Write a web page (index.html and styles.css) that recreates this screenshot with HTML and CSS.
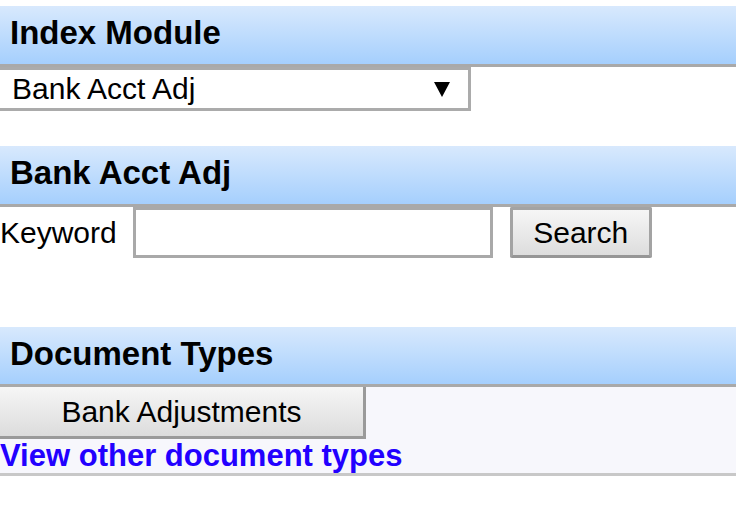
FILE: index.html
```html
<!DOCTYPE html>
<html lang="en">

<head>
    <meta charset="UTF-8">
    <title>Index Module</title>
    <link rel="stylesheet" href="styles.css">
</head>

<body>
    <div class="page">
        <div class="panel-header first">Index Module</div>
        <div class="module-select">
            <span>Bank Acct Adj</span>
            <svg class="arrow" width="16" height="15" viewBox="0 0 16 15">
                <polygon points="0,0 16,0 8,15" fill="#000" />
            </svg>
        </div>

        <div class="panel-header second">Bank Acct Adj</div>
        <div class="search-row">
            <label for="keyword">Keyword</label>
            <input type="text" id="keyword" name="keyword">
            <button type="button">Search</button>
        </div>

        <div class="panel-header third">Document Types</div>
        <div class="doc-types">
            <button type="button" class="doc-btn">Bank Adjustments</button>
            <a href="#" class="other-link">View other document types</a>
        </div>
    </div>
</body>

</html>
```

FILE: styles.css
```css
body {
    margin: 0;
    font-family: "Liberation Sans", Arial, sans-serif;
    background: #fff;
}

.page {
    width: 736px;
}

.panel-header {
    height: 54px;
    line-height: 54px;
    padding: 0 0 4px 10px;
    font-size: 33px;
    font-weight: bold;
    color: #000;
    background: linear-gradient(to bottom, #d8e9fd, #a5cffd);
    border-bottom: 3px solid #a9a9a9;
}

.panel-header.first {
    margin-top: 6px;
}

.panel-header.second {
    margin-top: 35px;
}

.panel-header.third {
    margin-top: 69px;
    height: 53px;
}

.module-select {
    width: 456px;
    height: 38px;
    padding-left: 12px;
    display: flex;
    align-items: center;
    justify-content: space-between;
    font-size: 30px;
    line-height: 38px;
    border: 3px solid #ababab;
    border-left: none;
}

.module-select .arrow {
    margin-right: 18px;
}

.search-row {
    display: flex;
    align-items: center;
    height: 51px;
    font-size: 30px;
}

.search-row label {
    margin-right: 16px;
}

.search-row input {
    width: 354px;
    height: 45px;
    box-sizing: content-box;
    padding: 0;
    border: 3px solid #a9a9a9;
    margin: 0 17px 0 0;
    font-size: 30px;
    font-family: inherit;
}

.search-row button {
    width: 142px;
    height: 51px;
    padding: 0;
    font-size: 30px;
    font-family: inherit;
    color: #000;
    background: linear-gradient(to bottom, #f6f6f6, #dddddd);
    border: 3px solid #a3a3a3;
    border-bottom-color: #969696;
    border-radius: 2px;
}

.doc-types {
    display: flex;
    flex-direction: column;
    align-items: flex-start;
    background: #f7f7fc;
    border-bottom: 3px solid #c8c8c8;
    height: 86px;
}

.doc-btn {
    width: 366px;
    height: 52px;
    padding: 0;
    font-size: 30px;
    font-family: inherit;
    color: #000;
    background: linear-gradient(to bottom, #f6f6f6, #dcdcdc);
    border: none;
    border-right: 3px solid #9a9a9a;
    border-bottom: 3px solid #9a9a9a;
}

.other-link {
    font-size: 31px;
    font-weight: bold;
    color: #2200ff;
    text-decoration: none;
    line-height: 34px;
}
```
